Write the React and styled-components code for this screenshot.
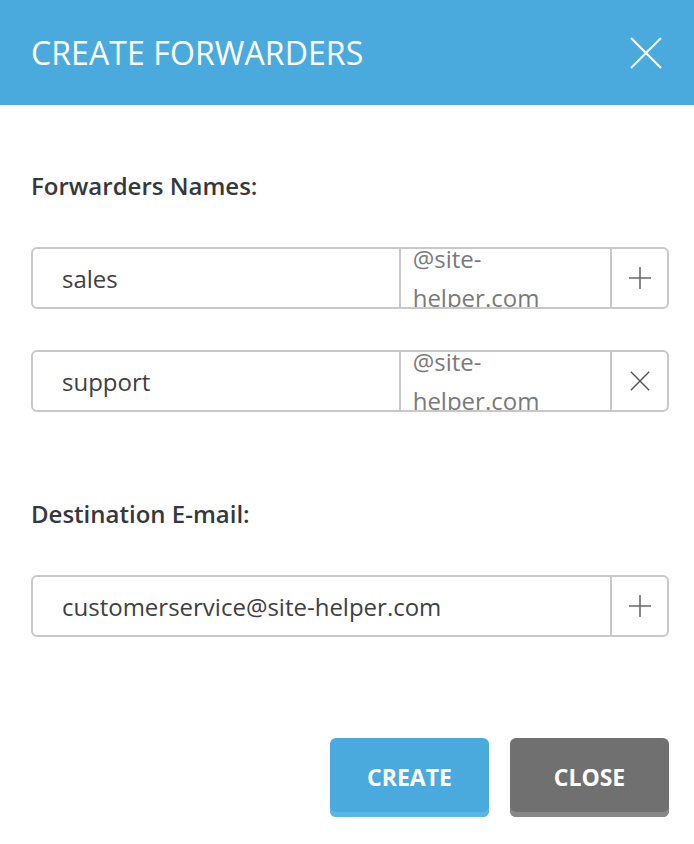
import styled, { createGlobalStyle } from 'styled-components';

const GlobalStyle = createGlobalStyle`
    html, body {
        margin: 0;
        padding: 0;
        background: #ffffff;
    }
    body {
        font-family: "Open Sans", "Noto Sans", sans-serif;
    }
`;

const FORWARDERS = [
    { id: 'f1', name: 'sales', action: 'add' },
    { id: 'f2', name: 'support', action: 'remove' },
];

const PlusIcon = () => (
    <svg width="24" height="24" viewBox="0 0 24 24">
        <path d="M12 1v22M1 12h22" stroke="#6a6a6a" strokeWidth="1.6" fill="none" />
    </svg>
);

const CrossIcon = ({ size = 24, color = '#555', width = 1.6 }) => (
    <svg width={size} height={size} viewBox="0 0 24 24">
        <path d="M2 2l20 20M22 2L2 22" stroke={color} strokeWidth={width} fill="none" />
    </svg>
);

function App() {
    return (
        <>
            <GlobalStyle />
            <Dialog>
                <Header>
                    <Title>CREATE FORWARDERS</Title>
                    <CloseX aria-label="close">
                        <CrossIcon size={36} color="#ffffff" width={1.4} />
                    </CloseX>
                </Header>
                <Body>
                    <Label>Forwarders Names:</Label>
                    <Rows>
                        {FORWARDERS.map(({ id, name, action }) => (
                            <Field key={id}>
                                <Value $width={370}>{name}</Value>
                                <Suffix>@site-helper.com</Suffix>
                                <IconButton>
                                    {action === 'add' ? <PlusIcon /> : <CrossIcon size={22} />}
                                </IconButton>
                            </Field>
                        ))}
                    </Rows>
                    <Label $top={86}>Destination E-mail:</Label>
                    <Rows>
                        <Field>
                            <Value>customerservice@site-helper.com</Value>
                            <IconButton>
                                <PlusIcon />
                            </IconButton>
                        </Field>
                    </Rows>
                    <Actions>
                        <Button $color="#4aaade" $stripe="#58b6ec">CREATE</Button>
                        <Button $color="#707070" $stripe="#888888">CLOSE</Button>
                    </Actions>
                </Body>
            </Dialog>
        </>
    );
}

const Dialog = styled.div`
    width: 694px;
    height: 844px;
    display: flex;
    flex-direction: column;
    background: #ffffff;
`;

const Header = styled.div`
    height: 105px;
    background: #4aaade;
    display: flex;
    align-items: center;
    justify-content: space-between;
    padding: 0 30px 0 31px;
    box-sizing: border-box;
`;

const Title = styled.h1`
    margin: 0;
    color: #ffffff;
    font-size: 32px;
    font-weight: 400;
    letter-spacing: 0.1px;
`;

const CloseX = styled.div`
    display: flex;
    align-items: center;
    justify-content: center;
    width: 36px;
    height: 36px;
`;

const Body = styled.div`
    flex: 1;
    display: flex;
    flex-direction: column;
    padding: 0 25px 0 31px;
`;

const Label = styled.div`
    margin-top: ${p => p.$top || 65}px;
    color: #35383c;
    font-size: 24px;
    font-weight: 600;
    line-height: 32px;
`;

const Rows = styled.div`
    display: flex;
    flex-direction: column;
    gap: 41px;
    margin-top: 45px;
`;

const Field = styled.div`
    height: 62px;
    box-sizing: border-box;
    border: 2px solid #c8c8c8;
    border-radius: 6px;
    display: flex;
    overflow: hidden;
`;

const Value = styled.div`
    ${p => (p.$width ? `width: ${p.$width - 2}px;` : 'flex: 1;')}
    display: flex;
    align-items: center;
    padding-left: 29px;
    box-sizing: border-box;
    color: #3e4043;
    font-size: 24px;
`;

const Suffix = styled.div`
    width: 213px;
    box-sizing: border-box;
    border-left: 2px solid #c8c8c8;
    padding: 0 12px;
    display: flex;
    align-items: center;
    overflow: hidden;
    color: #7a7a7a;
    font-size: 24px;
    line-height: 39px;
`;

const IconButton = styled.div`
    width: 55px;
    border-left: 2px solid #c8c8c8;
    display: flex;
    align-items: center;
    justify-content: center;
`;

const Actions = styled.div`
    margin-top: auto;
    margin-bottom: 27px;
    display: flex;
    justify-content: flex-end;
    gap: 21px;
`;

const Button = styled.button`
    width: 159px;
    height: 79px;
    border: none;
    border-radius: 6px;
    background: ${p => p.$color};
    box-shadow: inset 0 -5px 0 ${p => p.$stripe};
    color: #ffffff;
    font-family: "Open Sans", sans-serif;
    font-size: 23px;
    font-weight: 700;
    padding: 0 0 2px;
    &:hover {
        cursor: pointer;
    }
`;

export default App;
